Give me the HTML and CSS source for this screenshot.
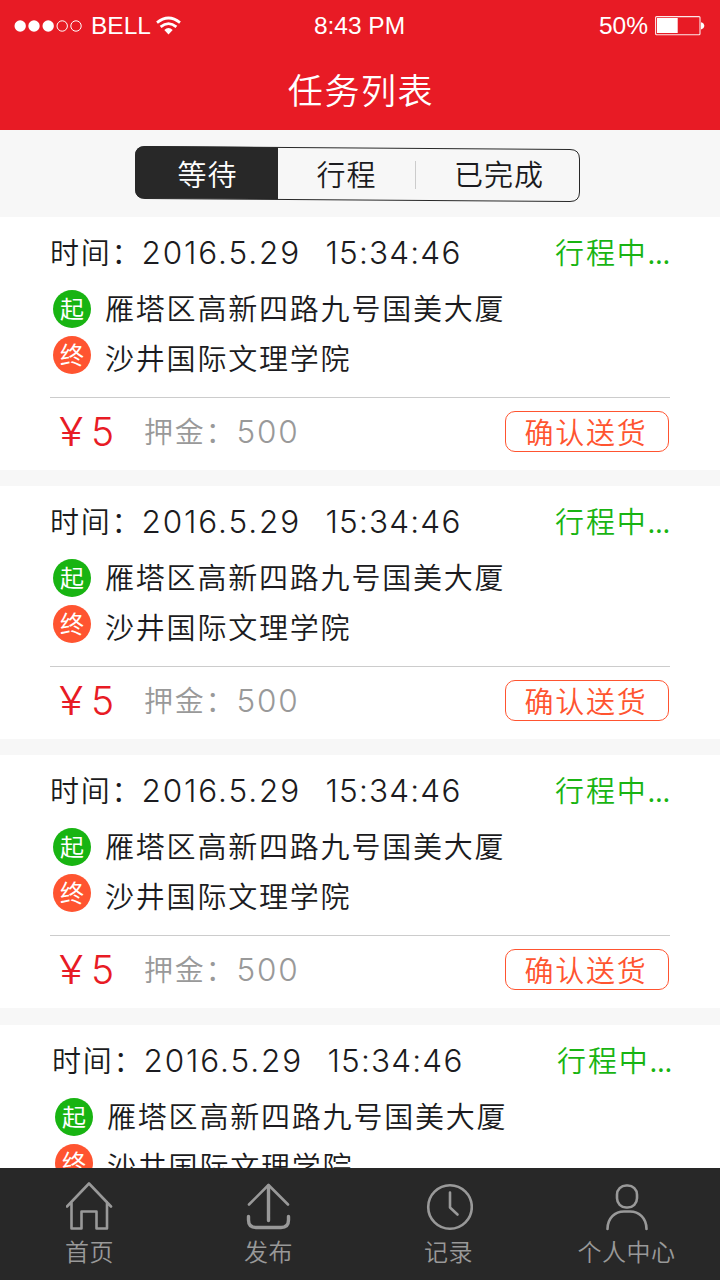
FILE: index.html
```html
<!DOCTYPE html>
<html lang="zh-CN">
<head>
  <meta charset="UTF-8" />
  <meta name="viewport" content="width=device-width, initial-scale=1.0" />
  <title>任务列表</title>
  <link rel="stylesheet" href="styles.css">
</head>
<body>
  <header class="header">
    <div class="statusbar">
      <div class="carrier">
        <svg width="70" height="12" viewBox="0 0 70 12">
          <g fill="#fff"><circle cx="6.2" cy="6" r="5.7"/><circle cx="20" cy="6" r="5.7"/><circle cx="34.2" cy="6" r="5.7"/></g>
          <g fill="none" stroke="#fff"><circle cx="48.2" cy="6" r="5.2"/><circle cx="62" cy="6" r="5.2"/></g>
        </svg>
        <span class="carrier-name">BELL</span>
        <svg width="26" height="20" viewBox="0 0 26 20">
          <g fill="none" stroke="#fff" stroke-width="2.7">
            <path d="M1 6.6Q12.500 -2.6 24 6.6"/>
            <path d="M4.600 10.9Q12.500 4.4 20.400 10.9"/>
          </g>
          <path fill="#fff" d="M8.300 14Q12.500 10.2 16.700 14L12.500 18.500z"/>
        </svg>
      </div>
      <div class="clock">8:43 PM</div>
      <div class="battery">
        <span>50%</span>
        <svg width="50" height="20" viewBox="0 0 50 20">
          <rect x=".6" y=".6" width="44.4" height="18.2" rx="1" fill="none" stroke="#fff" stroke-opacity=".9" stroke-width="1.1"/>
          <rect x="2" y="2" width="20.7" height="15" fill="#fff"/>
          <path d="M46 6.2c4.4.8 4.4 6.4 0 7.2z" fill="#fff"/>
        </svg>
      </div>
    </div>
    <h1>任务列表</h1>
  </header>

  <nav class="tabs">
    <svg class="tabs-frame" width="446" height="58" viewBox="0 0 446 58">
      <path d="M143 1.3V53.2L10 52.5Q0 52.5 0 43V10Q0 0 10 0z" fill="#282828"/>
      <path d="M10 .5L435 3.5Q444.500 3.500 444.500 13V46Q444.500 55.500 435 55.500L10 52.500Q.5 52.500 .5 43V10Q.5 .5 10 .5z" fill="none" stroke="#282828"/>
    </svg>
    <a class="tab tab-wait active">等待</a>
    <a class="tab tab-trip">行程</a>
    <a class="tab tab-done">已完成</a>
  </nav>

  <main class="list">
    <section class="card">
      <div class="time"><span>时间：</span><span class="num date">2016.5.29</span><span class="num hour">15:34:46</span><span class="state">行程中<i>...</i></span></div>
      <div class="place from"><b class="dot green">起</b><span>雁塔区高新四路九号国美大厦</span></div>
      <div class="place to"><b class="dot orange">终</b><span>沙井国际文理学院</span></div>
      <div class="bottom"><span class="price"><em>¥</em>5</span><span class="deposit">押金：</span><span class="num amount">500</span><button>确认送货</button></div>
    </section>
    <section class="card">
      <div class="time"><span>时间：</span><span class="num date">2016.5.29</span><span class="num hour">15:34:46</span><span class="state">行程中<i>...</i></span></div>
      <div class="place from"><b class="dot green">起</b><span>雁塔区高新四路九号国美大厦</span></div>
      <div class="place to"><b class="dot orange">终</b><span>沙井国际文理学院</span></div>
      <div class="bottom"><span class="price"><em>¥</em>5</span><span class="deposit">押金：</span><span class="num amount">500</span><button>确认送货</button></div>
    </section>
    <section class="card">
      <div class="time"><span>时间：</span><span class="num date">2016.5.29</span><span class="num hour">15:34:46</span><span class="state">行程中<i>...</i></span></div>
      <div class="place from"><b class="dot green">起</b><span>雁塔区高新四路九号国美大厦</span></div>
      <div class="place to"><b class="dot orange">终</b><span>沙井国际文理学院</span></div>
      <div class="bottom"><span class="price"><em>¥</em>5</span><span class="deposit">押金：</span><span class="num amount">500</span><button>确认送货</button></div>
    </section>
    <section class="card last">
      <div class="time"><span>时间：</span><span class="num date">2016.5.29</span><span class="num hour">15:34:46</span><span class="state">行程中<i>...</i></span></div>
      <div class="place from"><b class="dot green">起</b><span>雁塔区高新四路九号国美大厦</span></div>
      <div class="place to"><b class="dot orange">终</b><span>沙井国际文理学院</span></div>
    </section>
  </main>

  <footer class="footer">
    <a class="item">
      <svg width="48" height="50" viewBox="0 0 48 50">
        <path d="M1 24.500L23 1.500L45 24.500M5.500 20V46.500H15.500V29.500H30.500V46.500H41V20"/>
      </svg>
      <span>首页</span>
    </a>
    <a class="item">
      <svg width="48" height="50" viewBox="0 0 48 50">
        <path d="M4 22.500L23.500 3L43 22.500"/>
        <path stroke-width="3.400" d="M23.500 4V38.500M3.500 34.500V38Q3.500 45.500 11 45.500H36Q43.500 45.500 43.500 38V34.500"/>
      </svg>
      <span>发布</span>
    </a>
    <a class="item">
      <svg width="48" height="50" viewBox="0 0 48 50">
        <circle cx="25" cy="25" r="21.800"/>
        <path d="M25 10.500V25.500L32.500 32.500"/>
      </svg>
      <span>记录</span>
    </a>
    <a class="item">
      <svg width="48" height="50" viewBox="0 0 48 50">
        <rect x="14" y="3.500" width="20" height="22" rx="9.200"/>
        <path d="M4.500 47C4.500 36 12 29.500 21 29.500H27C36 29.500 43.500 36 43.500 47"/>
      </svg>
      <span>个人中心</span>
    </a>
  </footer>
</body>
</html>
```
FILE: styles.css
```css
* {
  box-sizing: border-box;
}
body {
  margin: 0;
  width: 720px;
  height: 1280px;
  overflow: hidden;
  display: flex;
  flex-direction: column;
  background: #f7f7f7;
  color: #1b1b20;
  font-family: "Noto Sans CJK SC", sans-serif;
  font-weight: 350;
  font-size: 29px;
  letter-spacing: 1.8px;
  white-space: nowrap;
}
.header {
  height: 130px;
  flex: none;
  background: #e81b25;
  color: #fff;
}
.statusbar {
  height: 51px;
  padding: 0 15px 0 14px;
  display: grid;
  grid-template-columns: 1fr auto 1fr;
  align-items: center;
  font-family: "Liberation Sans", Arial, sans-serif;
  font-weight: 400;
  font-size: 24.5px;
  letter-spacing: 0;
}
.carrier,
.battery {
  display: flex;
  align-items: center;
}
.carrier-name {
  margin: 0 5px 0 7px;
}
.battery {
  justify-content: flex-end;
  gap: 7px;
}
h1 {
  margin: 0;
  height: 79px;
  padding-left: 2px;
  line-height: 75px;
  text-align: center;
  font-size: 35px;
  font-weight: 350;
  letter-spacing: 1.6px;
}
.tabs {
  position: relative;
  height: 87px;
  flex: none;
  padding: 16px 140px 14px 135px;
  display: flex;
  align-items: center;
}
.tabs-frame {
  position: absolute;
  left: 135px;
  top: 16px;
}
.tab {
  position: relative;
  height: 28px;
  text-align: center;
  line-height: 25px;
  letter-spacing: 1px;
}
.tab-wait {
  width: 143px;
  padding-left: 2px;
  color: #fff;
}
.tab-trip {
  width: 138px;
  border-right: 1px solid #ccc;
}
.tab-done {
  flex: 1;
  padding-left: 2px;
}
.list {
  flex: 1;
  min-height: 0;
  overflow: hidden;
}
.card {
  height: 253px;
  margin-bottom: 16px;
  padding: 13px 50px 0;
  background: #fff;
}
.card.last {
  margin-top: 17px;
  padding-left: 52px;
  padding-right: 48px;
}
.time {
  height: 44px;
  padding-bottom: 2px;
  display: flex;
  align-items: center;
}
.num {
  padding-top: 1px;
  font-family: Inter, sans-serif;
  font-size: 31.5px;
  font-weight: 300;
  letter-spacing: 1.9px;
}
.time .num {
  padding-top: 3px;
}
.date {
  width: 184px;
  margin-left: -1px;
}
.hour {
  letter-spacing: 1.2px;
}
.state {
  margin-left: auto;
  color: #18b412;
}
.state i {
  font-style: normal;
  letter-spacing: -0.3px;
}
.place {
  height: 48px;
  display: flex;
  align-items: center;
  gap: 14px;
  padding-left: 3px;
}
.from {
  margin-top: 10px;
}
.from .dot {
  margin-top: 2px;
}
.from span {
  padding-bottom: 2px;
}
.dot {
  width: 38px;
  height: 38px;
  border-radius: 50%;
  color: #fff;
  font-size: 24px;
  font-weight: 400;
  line-height: 35px;
  text-align: center;
  letter-spacing: 0;
}
.green {
  background: #18b412;
}
.orange {
  background: #ff5430;
}
.to .dot {
  margin-bottom: 3px;
}
.to span {
  padding-top: 2px;
}
.bottom {
  height: 72px;
  margin-top: 17px;
  padding: 0 1px 5px 9px;
  border-top: 1px solid #ccc;
  display: flex;
  align-items: center;
}
.price {
  width: 85px;
  color: #e81b25;
  font-family: Inter, sans-serif;
  font-size: 39px;
  font-weight: 300;
  letter-spacing: 0;
}
.price em {
  display: inline-block;
  width: 32px;
  font-style: normal;
  transform: scaleX(1.15);
  transform-origin: left;
}
.deposit,
.amount {
  color: #999;
}
.deposit {
  padding-bottom: 2px;
}
button {
  width: 164px;
  height: 41px;
  margin-left: auto;
  padding: 0 2px 0 0;
  border: 1px solid #ff5430;
  border-radius: 10px;
  background: #fff;
  color: #ff5430;
  font: inherit;
  line-height: 36px;
  letter-spacing: 1.7px;
}
.footer {
  height: 112px;
  flex: none;
  padding: 14px 4px 0 0;
  background: #282828;
  color: #999;
  display: grid;
  grid-template-columns: repeat(4, 179px);
}
.item {
  display: flex;
  flex-direction: column;
  align-items: center;
  font-size: 24px;
  line-height: 38px;
  letter-spacing: 0.5px;
}
.item svg {
  fill: none;
  stroke: #999;
  stroke-width: 2.6;
  stroke-linecap: round;
  stroke-linejoin: round;
}
.item:nth-child(3) {
  padding-left: 2px;
}
```
